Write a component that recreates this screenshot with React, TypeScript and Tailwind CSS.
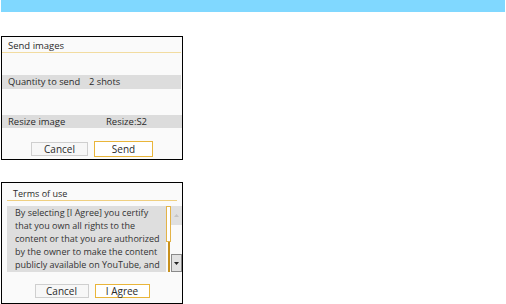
import React from 'react';

const font = { fontFamily: '"Open Sans", "Noto Sans", sans-serif' };

const Btn: React.FC<{ label: string; active?: boolean; w: string }> = ({ label, active, w }) =>
  active ? (
    <div className={`${w} h-[16px] border-[1.5px] border-[#e9b53a] bg-white flex items-center justify-center text-[10px] leading-none text-[#2a2a2a]`}>
      {label}
    </div>
  ) : (
    <div className={`${w} h-[14px] border border-[#cfcfcf] bg-[#f7f7f7] flex items-center justify-center text-[10px] leading-none text-[#2a2a2a]`}>
      {label}
    </div>
  );

const SendPanel = () => (
  <div className="ml-[1px] w-[182px] h-[124px] border border-black bg-[#fafafa] flex flex-col">
    <div className="h-[15px] pl-[6px] flex items-end text-[9.5px] leading-none text-[#2a2a2a] pb-[2px]">Send images</div>
    <div className="h-[1px] mr-[1px] bg-[#f2dca0]" />
    <div className="h-[22px]" />
    <div className="h-[14px] mr-[1px] bg-[#dddddd] flex items-center pl-[6px] text-[9.3px] leading-none text-[#2a2a2a]">
      <span className="w-[81px]">Quantity to send</span>
      <span>2 shots</span>
    </div>
    <div className="h-[26px]" />
    <div className="h-[13px] bg-[#dcdcdc] flex items-center pl-[6px] text-[9.5px] leading-none text-[#2a2a2a]">
      <span className="w-[98px]">Resize image</span>
      <span>Resize:S2</span>
    </div>
    <div className="h-[13px]" />
    <div className="h-[16px] flex items-center justify-center gap-[6px]">
      <Btn label="Cancel" w="w-[57px]" />
      <Btn label="Send" active w="w-[59px]" />
    </div>
  </div>
);

const TermsPanel = () => (
  <div className="ml-[1px] w-[182px] h-[122px] border border-black bg-[#fafafa] flex flex-col">
    <div className="h-[17px] mx-[5px] pl-[6px] flex items-end pb-[2px] text-[9px] leading-none text-[#2a2a2a]">Terms of use</div>
    <div className="h-[1px] ml-[5px] mr-[5px] bg-[#efcf80]" />
    <div className="h-[5px]" />
    <div className="h-[66px] flex pl-[5px]">
      <div className="w-[159px] bg-[#dedede] overflow-hidden pl-[8px] text-[9px] leading-[13px] text-[#333] whitespace-nowrap">
        By selecting [I Agree] you certify<br />
        that you own all rights to the<br />
        content or that you are authorized<br />
        by the owner to make the content<br />
        publicly available on YouTube, and
      </div>
      <div className="w-[5px] flex flex-col items-center">
        <div className="w-[5px] h-[36px] border border-[#e3b347] bg-white" />
        <div className="w-[2px] flex-1 bg-[#c8901c]" />
      </div>
      <div className="w-[11px] flex flex-col justify-between">
        <div className="h-[19px] bg-[#e0e0e0] flex items-center justify-center">
          <svg width="5" height="3" viewBox="0 0 5 3"><path d="M0 3 L2.5 0 L5 3 Z" fill="#c4c4c4" /></svg>
        </div>
        <div className="h-[18px] bg-[#e2e2e2] border border-[#8a8a8a] flex items-center justify-center">
          <svg width="5" height="3" viewBox="0 0 5 3"><path d="M0 0 L2.5 3 L5 0 Z" fill="#222" /></svg>
        </div>
      </div>
    </div>
    <div className="h-[12px]" />
    <div className="h-[14px] flex items-center justify-center gap-[6px]">
      <Btn label="Cancel" w="w-[54px]" />
      <div className="w-[55px] h-[14px] border-[1.5px] border-[#e9b53a] bg-white flex items-center justify-center text-[10px] leading-none text-[#2a2a2a]">
        I Agree
      </div>
    </div>
  </div>
);

export default function App() {
  return (
    <div className="w-[506px] h-[304px] bg-white overflow-hidden" style={font}>
      <div className="h-[12px] mx-[1px] bg-[#80d8ff]" />
      <div className="h-[24px]" />
      <SendPanel />
      <div className="h-[22px]" />
      <TermsPanel />
    </div>
  );
}
